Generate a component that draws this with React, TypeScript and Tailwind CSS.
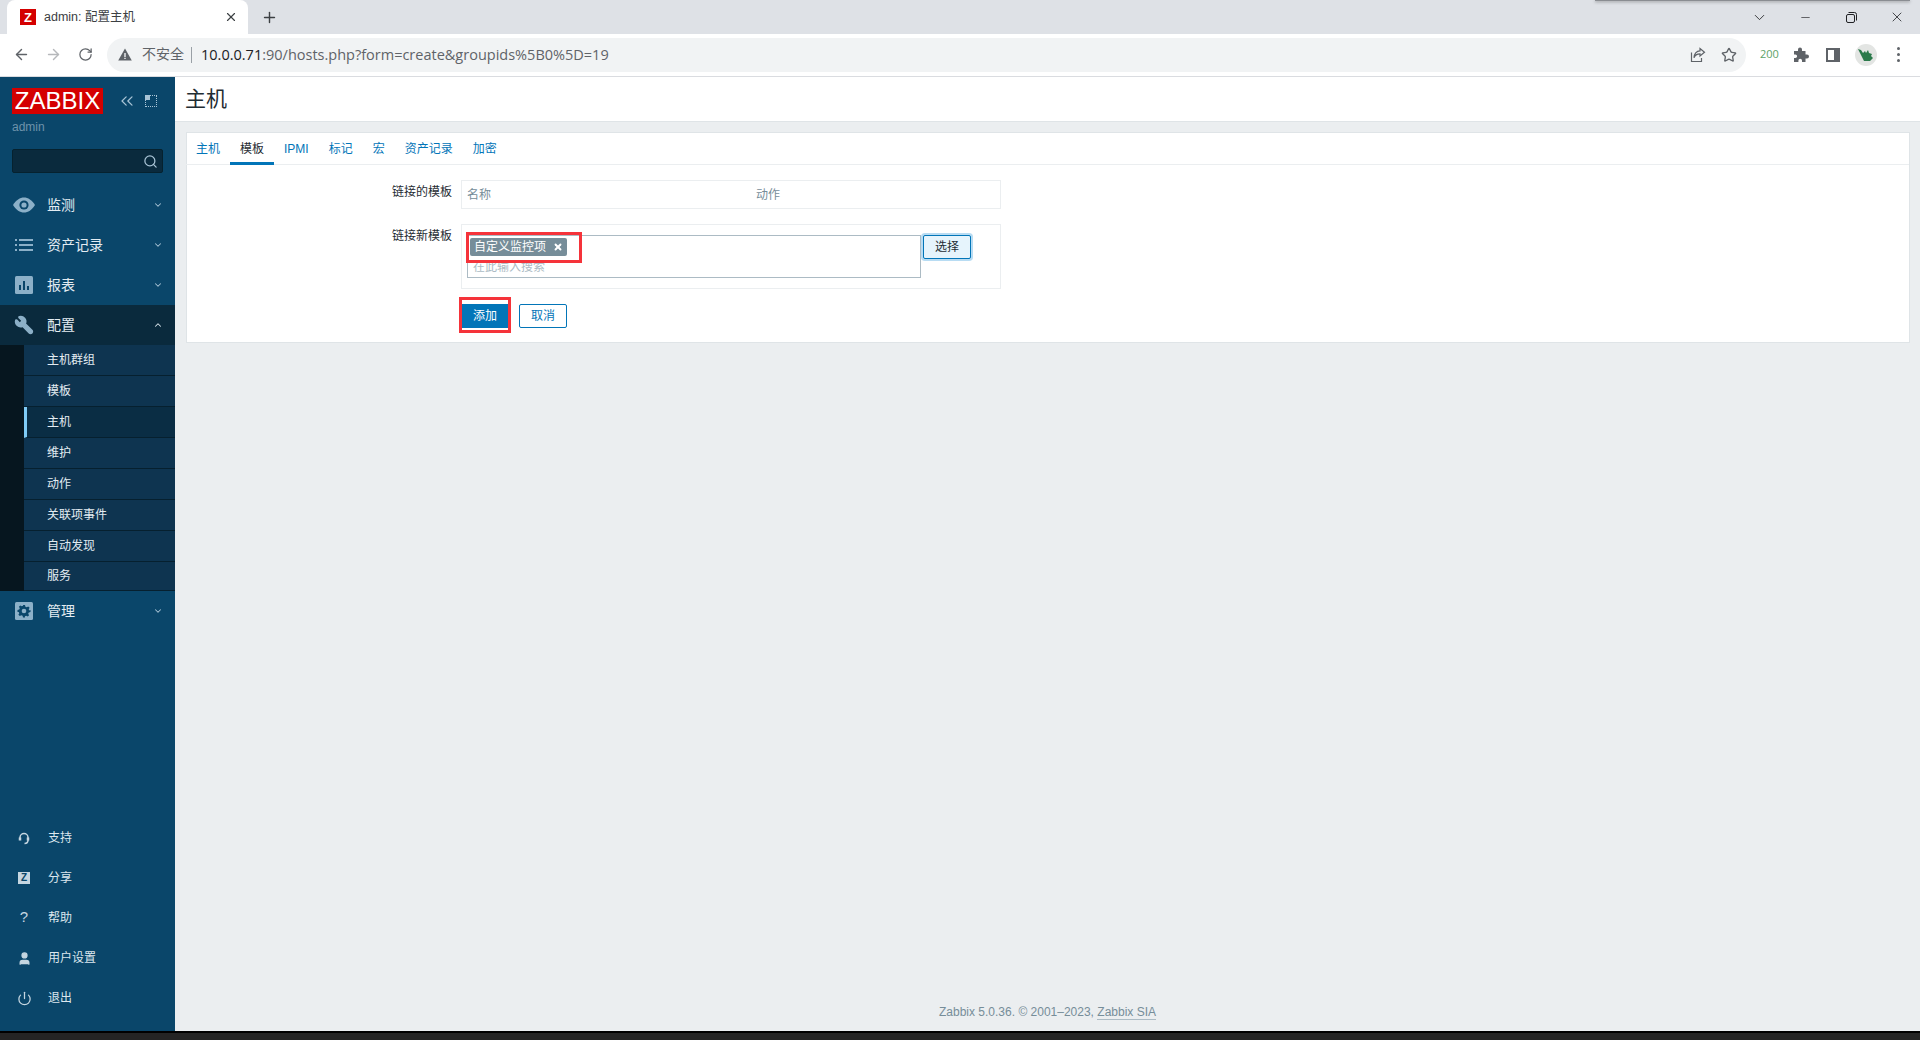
import React from "react";
import { ArrowLeft, ArrowRight, RotateCw, Plus, X, Minus, ChevronDown, ChevronUp, Star, Search, ChevronsLeft, Wrench, User, Power } from "lucide-react";

const ui = "font-['Liberation_Sans','Noto_Sans_CJK_SC',sans-serif]";

const mainMenu = [
  { label: "监测", icon: <EyeIcon /> },
  { label: "资产记录", icon: <ListIcon /> },
  { label: "报表", icon: <ChartIcon /> },
];

const subMenu = ["主机群组", "模板", "主机", "维护", "动作", "关联项事件", "自动发现", "服务"];

const bottomMenu = [
  { label: "支持", icon: <HeadsetIcon /> },
  { label: "分享", icon: <ZIcon /> },
  { label: "帮助", icon: <span className="-mt-[3px] text-[15px] leading-none">?</span> },
  { label: "用户设置", icon: <User size={15} fill="currentColor" strokeWidth={2} /> },
  { label: "退出", icon: <Power size={15} strokeWidth={2} /> },
];

const tabs = ["主机", "模板", "IPMI", "标记", "宏", "资产记录", "加密"];

function EyeIcon() {
  return (
    <svg width="22" height="16" viewBox="0 0 22 16">
      <path d="M0 8C3 3 7 .5 11 .5S19 3 22 8c-3 5-7 7.5-11 7.5S3 13 0 8z" fill="currentColor" />
      <circle cx="11" cy="8" r="4.6" fill="#0a466a" />
      <circle cx="11" cy="8" r="2.6" fill="currentColor" />
    </svg>
  );
}

function ListIcon() {
  return (
    <svg width="18" height="12" viewBox="0 0 18 12" fill="currentColor">
      <path d="M0 0h2v2H0zM4 0h14v2H4zM0 5h2v2H0zM4 5h14v2H4zM0 10h2v2H0zM4 10h14v2H4z" />
    </svg>
  );
}

function ChartIcon() {
  return (
    <svg width="18" height="18" viewBox="0 0 18 18">
      <rect width="18" height="18" rx="1.5" fill="currentColor" />
      <path d="M4 9h2v5H4zM8 5h2v9H8zM12 10h2v4h-2z" fill="#0a466a" />
    </svg>
  );
}

function GearIcon() {
  return (
    <svg width="18" height="18" viewBox="0 0 18 18">
      <rect width="18" height="18" rx="1.5" fill="currentColor" />
      <path d="M8 3h2l.4 1.7 1.3.6 1.5-.9 1.4 1.4-.9 1.5.6 1.3L15.500 8v2l-1.700.4-.6 1.300.9 1.500-1.400 1.400-1.500-.9-1.300.6L10 15.500H8l-.4-1.700-1.300-.6-1.500.9-1.400-1.400.9-1.500-.6-1.300L2.500 10V8l1.700-.4.6-1.300-.9-1.500 1.400-1.400 1.500.9 1.300-.6z" fill="#0a466a" />
      <circle cx="9" cy="9" r="2.300" fill="currentColor" />
    </svg>
  );
}

function HeadsetIcon() {
  return (
    <svg width="12" height="13" viewBox="0 0 12 13" fill="none" stroke="currentColor" strokeWidth="1.500">
      <path d="M2 8V5.500a4 4 0 0 1 8 0V8c0 2-1.500 3.500-3.500 3.500" />
      <path d="M2 5.500v3M10 5.500v3" strokeWidth="2.500" />
    </svg>
  );
}

function ZIcon() {
  return (
    <span className="flex h-3 w-3 items-center justify-center bg-[#c5d6e1] text-[10px] font-bold leading-none text-[#0a466a]">Z</span>
  );
}

function ShareIcon() {
  return (
    <svg width="16" height="16" viewBox="0 0 16 16" fill="none" stroke="#5f6368" strokeWidth="1.200">
      <path d="M1.500 5.500v9h10V11" />
      <path d="M10 1.500l4.500 3.700L10 9V6.800c-3 0-5 1-6 4 0-4 2.500-7 6-7z" />
    </svg>
  );
}

function PuzzleIcon() {
  return (
    <svg width="15" height="15" viewBox="0 0 15 15" fill="#5f6368">
      <path d="M0 4h4V2.500a2 2 0 0 1 4 0V4h3.500v3.500H13a2 2 0 0 1 0 4h-1.500V15H8v-1.500a1.800 1.800 0 0 0-3.600 0V15H0v-4h1.300a1.800 1.800 0 0 0 0-3.600H0z" />
    </svg>
  );
}

function AvatarIcon() {
  return (
    <span className="flex h-[22px] w-[22px] items-center justify-center rounded-full bg-[#e3e5e3]">
      <svg width="15" height="14" viewBox="0 0 15 14" fill="#2b7a4b">
        <path d="M0 1l3 1 2 3 2-2 1 2 2-3 1 3 3 1-1 2 2 2-3 3H6L4 9 2 5z" />
      </svg>
    </span>
  );
}

function RestoreIcon() {
  return (
    <svg width="11" height="11" viewBox="0 0 11 11" fill="none" stroke="#202124" strokeWidth="1">
      <rect x=".5" y="2.500" width="8" height="8" rx="1.500" />
      <path d="M2.500 .5h6a2 2 0 0 1 2 2v6" />
    </svg>
  );
}

function Browser() {
  return (
    <div className="relative shrink-0">
      {/* tab strip */}
      <div className="flex h-[34px] bg-[#dee1e6] pl-[7px]">
        <div className="flex h-[34px] w-[241px] items-center rounded-t-lg bg-white pl-[13px] pr-[10px]">
          <span className="flex h-4 w-4 items-center justify-center bg-[#d40000] text-[13px] font-bold leading-none text-white">Z</span>
          <span className="ml-[8px] text-[12.500px] text-[#3c4043]">admin: 配置主机</span>
          <X size={14} className="ml-auto text-[#3c4043]" />
        </div>
        <Plus size={17} className="ml-[13px] mt-[9px] text-[#3c4043]" />
        <div className="ml-auto flex items-center text-[#202124]">
          <ChevronDown size={17} strokeWidth={1.200} className="mr-[31px]" />
          <Minus size={13} strokeWidth={1.200} className="mr-[34px]" />
          <RestoreIcon />
          <X size={16} strokeWidth={1.200} className="ml-[32px] mr-[15px]" />
        </div>
      </div>
      {/* toolbar */}
      <div className="flex h-[43px] items-center border-b border-[#dadce0] bg-white pb-[1px]">
        <ArrowLeft size={17} className="ml-[13px] text-[#5f6368]" />
        <ArrowRight size={17} className="ml-[15px] text-[#b6b8bb]" />
        <RotateCw size={15} className="ml-[16px] text-[#5f6368]" />
        <div className="ml-[14px] flex h-[34px] w-[1639px] shrink-0 items-center rounded-full bg-[#f1f3f4] pl-[11px]">
          <svg width="14" height="13" viewBox="0 0 14 13">
            <path d="M7 .5L13.800 12.500H.2z" fill="#5f6368" />
            <path d="M6.300 5h1.400v4H6.300zM6.300 9.800h1.400v1.300H6.300z" fill="#f1f3f4" />
          </svg>
          <span className="ml-[10px] text-[14px] text-[#5f6368]">不安全</span>
          <span className="ml-[7px] h-[16px] w-px bg-[#9aa0a6]" />
          <span className="ml-[9px] whitespace-nowrap font-['Open_Sans',sans-serif] text-[14.500px] text-[#5f6368]">
            <span className="text-[#202124]">10.0.0.71</span>:90/hosts.php?form=create&amp;groupids%5B0%5D=19
          </span>
          <span className="ml-auto mr-[9px] flex items-center gap-[15px]">
            <ShareIcon />
            <Star size={16} className="text-[#5f6368]" />
          </span>
        </div>
        <span className="ml-[14px] font-['Open_Sans',sans-serif] text-[11px] text-[#5da267]">200</span>
        <span className="ml-[15px]"><PuzzleIcon /></span>
        <span className="ml-[17px] flex h-[14px] w-[14px] justify-end border-[2px] border-[#5f6368] bg-white">
          <span className="h-full w-[4px] bg-[#5f6368]" />
        </span>
        <span className="ml-[15px]"><AvatarIcon /></span>
        <span className="ml-[20px] flex flex-col gap-[3px]">
          <span className="h-[3px] w-[3px] rounded-full bg-[#5f6368]" />
          <span className="h-[3px] w-[3px] rounded-full bg-[#5f6368]" />
          <span className="h-[3px] w-[3px] rounded-full bg-[#5f6368]" />
        </span>
      </div>
      {/* window sliver behind the top edge */}
      <div className="absolute right-[10px] top-0 h-[1px] w-[315px] bg-[#8a8d92] shadow-[0_1px_3px_rgba(0,0,0,.5)]" />
    </div>
  );
}

function Sidebar() {
  return (
    <aside className="flex w-[175px] shrink-0 flex-col bg-[#0a466a]">
      <div className="flex items-center pl-[12px] pt-[11px]">
        <span className="flex h-[26px] w-[91px] items-center justify-center bg-[#d40000] text-[24px] leading-none text-white">ZABBIX</span>
        <ChevronsLeft size={20} strokeWidth={1.500} className="ml-[14px] text-[#a9c4d6]" />
        <span className="relative ml-[8px] h-[12px] w-[12px] border border-dotted border-[#a9c4d6]">
          <span className="absolute left-[-1px] top-[-1px] h-[5px] w-[5px] bg-[#a9c4d6]" />
        </span>
      </div>
      <div className="pl-[12px] pt-[6px] text-[12px] leading-[14px] text-[#6e93ab]">admin</div>
      <div className="mx-[12px] mt-[15px] flex h-[24px] items-center justify-end rounded-[2px] border border-[#06222f] bg-[#0a2a3d] pr-[4px]">
        <Search size={15} className="text-[#a9c4d6]" />
      </div>
      <nav className="mt-[12px]">
        {mainMenu.map((m) => (
          <MenuRow key={m.label} {...m} />
        ))}
        <MenuRow label="配置" icon={<Wrench size={20} fill="currentColor" className="-scale-x-100" />} open />
        <div className="bg-[#06161f] pl-[24px]">
          {subMenu.map((s, i) => (
            <div
              key={s}
              className={`flex h-[31px] items-center border-b-[1.5px] border-[#06202f] pl-[23px] text-[12px] text-[#e3ecf2] ${
                s === "主机" ? "border-l-[3px] !pl-[20px] border-l-[#7fcbf5] bg-[#0a2d44]" : "bg-[#0e3450]"
              } ${i === subMenu.length - 1 ? "!h-[29px] border-b-0" : ""}`}
            >
              {s}
            </div>
          ))}
        </div>
        <MenuRow label="管理" icon={<GearIcon />} />
      </nav>
      <div className="mt-auto pb-[13px]">
        {bottomMenu.map((b) => (
          <div key={b.label} className="flex h-[40px] items-center text-[12px] text-[#dce7ee]">
            <span className="flex w-[48px] justify-center text-[#c5d6e1]">{b.icon}</span>
            {b.label}
          </div>
        ))}
      </div>
    </aside>
  );
}

function MenuRow({ label, icon, open }: { label: string; icon: React.ReactNode; open?: boolean }) {
  return (
    <div className={`flex h-[40px] items-center pr-[12px] text-[14px] text-[#e3ecf2] ${open ? "bg-[#0a2a3d]" : ""}`}>
      <span className="flex w-[47px] justify-center text-[#8cb0c8]">{icon}</span>
      {label}
      {open ? (
        <ChevronUp size={10} strokeWidth={2.500} className="ml-auto text-[#dce7ee]" />
      ) : (
        <ChevronDown size={10} strokeWidth={2.500} className="ml-auto text-[#a9c4d6]" />
      )}
    </div>
  );
}

function Form() {
  return (
    <div className="ml-[11px] mr-[10px] mt-[10px] h-[211px] border border-[#dfe4e7] bg-white">
      <div className="-ml-px flex h-[32px] border-b border-[#ebeef0]">
        {tabs.map((t) => (
          <div
            key={t}
            className={`flex h-[32px] items-center px-[10px] text-[12px] ${
              t === "模板" ? "border-b-[3px] border-[#0275b8] pt-[3px] text-[#1f2c33]" : "text-[#0275b8]"
            }`}
          >
            {t}
          </div>
        ))}
      </div>

      <div className="flex pt-[15px]">
        <div className="w-[274px] pr-[9px] pt-[5px] text-right text-[12px] leading-[14px] text-[#1f2c33]">链接的模板</div>
        <div className="flex h-[29px] w-[540px] items-center border border-[#ebeef0] pl-[5px] text-[12px] text-[#768d99]">
          <span className="w-[289px]">名称</span>
          <span>动作</span>
        </div>
      </div>

      <div className="flex pt-[15px]">
        <div className="w-[274px] pr-[9px] pt-[5px] text-right text-[12px] leading-[14px] text-[#1f2c33]">链接新模板</div>
        <div className="flex h-[65px] w-[540px] border border-[#ebeef0] pl-[5px] pt-[10px]">
          <div className="relative h-[43px] w-[454px] border border-[#acbbc4] pl-[2px] pt-[2px]">
            <span className="flex h-[18px] w-[97px] items-center whitespace-nowrap rounded-[2px] bg-[#768d99] pl-[4px] text-[12px] leading-none text-white">
              自定义监控项
              <X size={10} strokeWidth={4.500} className="ml-[7px]" />
            </span>
            <div className="pl-[3px] pt-[4px] text-[12px] leading-[14px] text-[#acbbc4]">在此输入搜索</div>
            {/* red annotation */}
            <span className="absolute left-[-2px] top-[-4px] h-[31px] w-[116px] border-[3px] border-[#f5333a]" />
          </div>
          <div className="ml-[2px] flex h-[24px] w-[48px] items-center justify-center rounded-[2px] border border-[#0275b8] bg-[#e6f4fc] text-[12px] text-[#1f2c33] shadow-[0_0_0_2px_#b8dcf3]">
            选择
          </div>
        </div>
      </div>

      <div className="flex pl-[275px] pt-[15px]">
        <div className="relative flex h-[24px] w-[46px] items-center justify-center bg-[#0275b8] text-[12px] text-white">
          添加
          {/* red annotation */}
          <span className="absolute left-[-3px] top-[-7px] h-[36px] w-[52px] border-[3px] border-[#f5333a]" />
        </div>
        <div className="ml-[11px] flex h-[24px] w-[48px] items-center justify-center rounded-[2px] border border-[#0275b8] text-[12px] text-[#0275b8]">
          取消
        </div>
      </div>
    </div>
  );
}

export default function App() {
  return (
    <div className={`${ui} flex h-[1040px] flex-col overflow-hidden bg-[#ebeef0]`}>
      <Browser />
      <div className="flex min-h-0 flex-1">
        <Sidebar />
        <main className="flex min-w-0 flex-1 flex-col">
          <header className="flex h-[45px] shrink-0 items-center border-b border-[#dfe4e7] bg-white pl-[10px] text-[21px] text-[#1f2c33]">主机</header>
          <Form />
          <footer className="mt-auto pb-[12px] text-center text-[12px] leading-[14px] text-[#768d99]">
            Zabbix 5.0.36. © 2001–2023, <span className="border-b border-[#acbbc4]">Zabbix SIA</span>
          </footer>
        </main>
      </div>
      <div className="h-[9px] shrink-0 border-t-2 border-black bg-[#242424]" />
    </div>
  );
}
